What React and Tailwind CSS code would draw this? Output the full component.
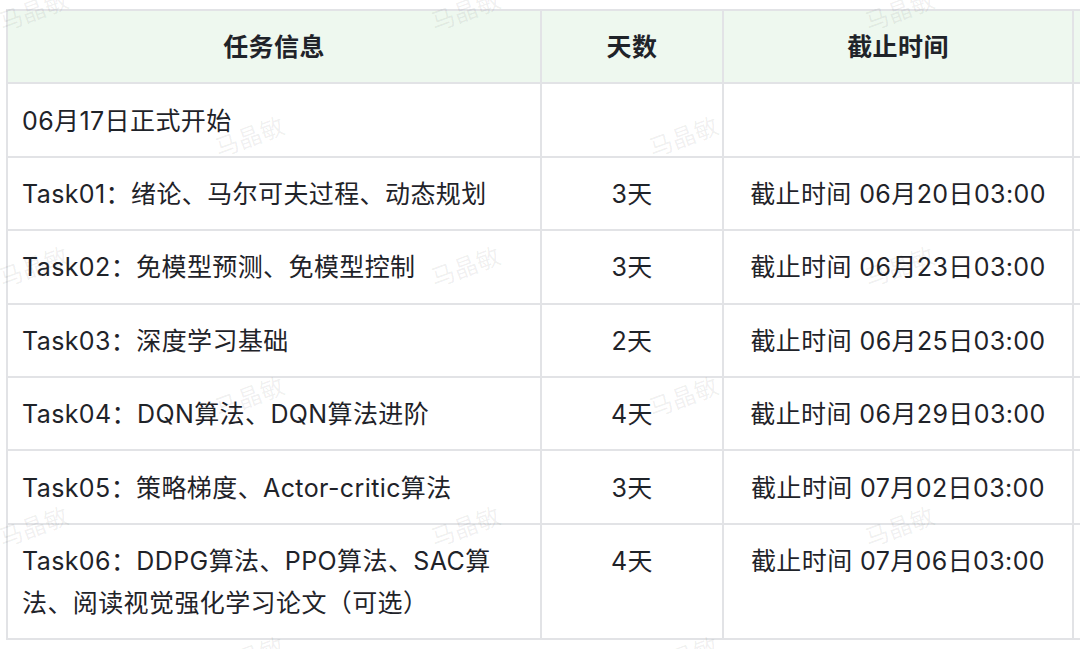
import React from 'react';

const rows = [
  { task: '06月17日正式开始', days: '', due: '' },
  { task: 'Task01：绪论、马尔可夫过程、动态规划', days: '3天', due: '截止时间 06月20日03:00' },
  { task: 'Task02：免模型预测、免模型控制', days: '3天', due: '截止时间 06月23日03:00' },
  { task: 'Task03：深度学习基础', days: '2天', due: '截止时间 06月25日03:00' },
  { task: 'Task04：DQN算法、DQN算法进阶', days: '4天', due: '截止时间 06月29日03:00' },
  { task: 'Task05：策略梯度、Actor-critic算法', days: '3天', due: '截止时间 07月02日03:00' },
  {
    task: (
      <>
        Task06：DDPG算法、PPO算法、SAC算
        <br />
        法、阅读视觉强化学习论文（可选）
      </>
    ),
    days: '4天',
    due: '截止时间 07月06日03:00',
  },
];

// watermark grid: [left, top]
const marks = [
  [0, -8], [432, -8], [866, -8],
  [216, 118], [650, 118],
  [0, 248], [432, 248], [866, 248],
  [216, 378], [650, 378],
  [0, 508], [432, 508], [866, 508],
  [216, 638], [650, 638],
];

const cell = 'border-2 border-[#e2e3e6] px-[14px] pt-[15.3px] pb-[14.1px] align-top';

export default function App() {
  return (
    <div
      className="relative w-[1080px] h-[649px] overflow-hidden bg-white text-[#1f2329] text-[25px] leading-[42px] tracking-[0.4px]"
      style={{ fontFamily: 'Inter, "Noto Sans CJK SC", sans-serif' }}
    >
      <div className="pt-[9px] pl-[6px]">
        <table className="table-fixed border-collapse w-[1320px]">
          <colgroup>
            <col className="w-[534px]" />
            <col className="w-[182px]" />
            <col className="w-[350px]" />
            <col className="w-[254px]" />
          </colgroup>
          <thead>
            <tr className="bg-[#eef8ef]">
              <th className={`${cell} text-center font-semibold`}>任务信息</th>
              <th className={`${cell} text-center font-semibold`}>天数</th>
              <th className={`${cell} text-center font-semibold`}>截止时间</th>
              <th className={`${cell} text-center font-semibold`}></th>
            </tr>
          </thead>
          <tbody>
            {rows.map((r, i) => (
              <tr key={i}>
                <td className={`${cell} text-left`}>{r.task}</td>
                <td className={`${cell} text-center`}>{r.days}</td>
                <td className={`${cell} text-center`}>{r.due}</td>
                <td className={cell}></td>
              </tr>
            ))}
          </tbody>
        </table>
      </div>

      {/* watermark overlay */}
      <div className="pointer-events-none absolute inset-0">
        {marks.map(([x, y], i) => (
          <span
            key={i}
            className="absolute text-[24px] leading-none tracking-normal text-[#1f2329]/[0.07] -rotate-[20deg] origin-left whitespace-nowrap"
            style={{ left: x, top: y + 20 }}
          >
            马晶敏
          </span>
        ))}
      </div>
    </div>
  );
}
